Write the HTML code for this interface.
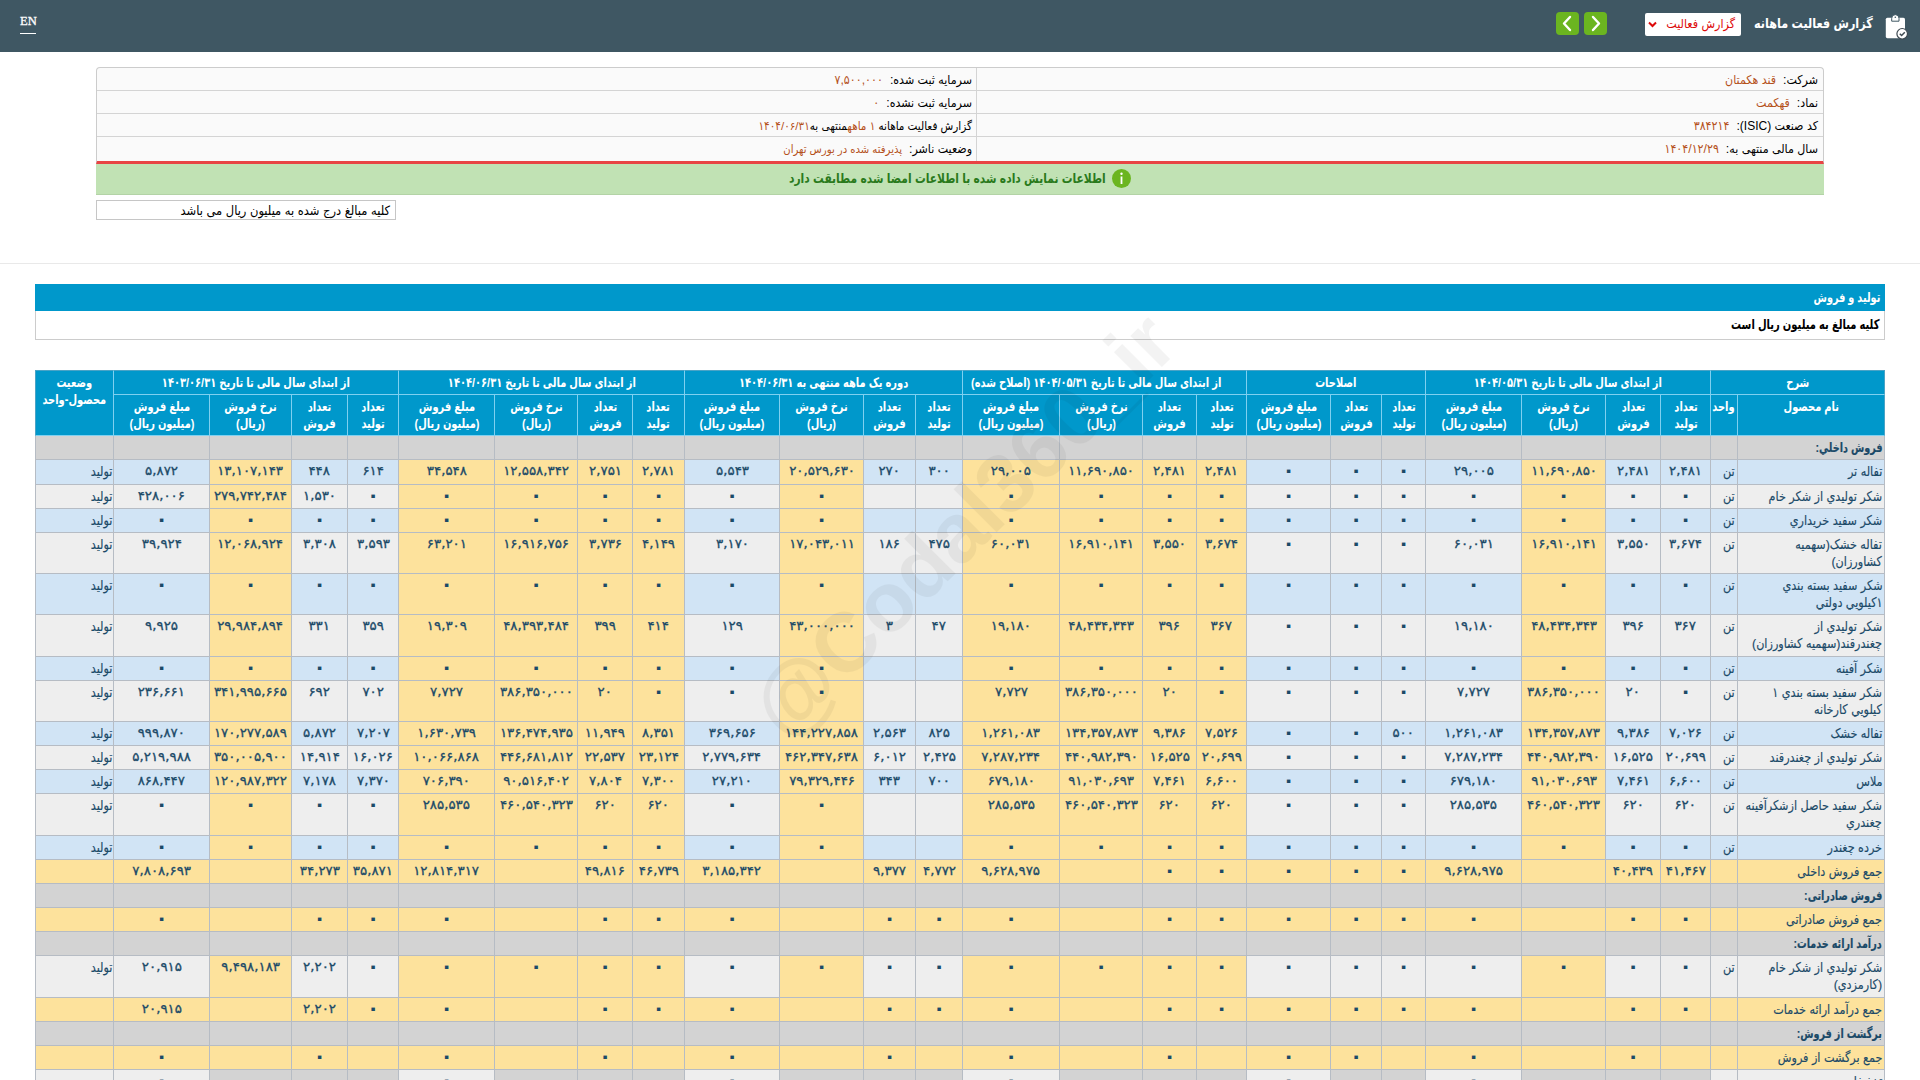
<!DOCTYPE html>
<html lang="fa" dir="rtl">
<head>
<meta charset="utf-8">
<title>گزارش فعالیت ماهانه</title>
<style>
*{box-sizing:border-box;margin:0;padding:0}
html,body{width:1920px;height:1080px;overflow:hidden;background:#fff}
body{font-family:"Liberation Sans","DejaVu Sans Condensed","DejaVu Sans",sans-serif;font-size:12px;color:#000;position:relative}
.abs{position:absolute}
/* top bar */
#bar{left:0;top:0;width:1920px;height:52px;background:#3f5763}
#en{left:20px;top:13px;font-family:"Liberation Serif",serif;font-size:12.6px;-webkit-text-stroke:.3px #fff;color:#fff;line-height:17px;direction:ltr;border-bottom:1px solid #fff;padding-bottom:3px;width:16px;white-space:nowrap}
#ttl{right:47px;top:12px;height:24px;line-height:24px;color:#fff;font-weight:bold;font-size:13.6px;white-space:nowrap;transform:scaleX(.915);transform-origin:right center}
#sel{left:1645px;top:13px;width:96px;height:23px;background:#fff;border-radius:2px;color:#dd0a0a;font-size:12.4px;line-height:22px;padding-right:6px;white-space:nowrap}
.btn{top:12px;width:23px;height:23px;background:#6bb520;border-radius:4px}
/* info */
#info{left:96px;top:67px;width:1728px;height:97px;border:1px solid #ccc;border-bottom:3px solid #e84444;border-radius:4px 4px 0 0;background:#fafafa}
#info .r{position:absolute;left:0;right:0;height:23px;border-bottom:1px solid #d4d4d4;line-height:24px;font-size:12.3px;white-space:nowrap}
#info .c{position:absolute;top:0;height:100%;padding-right:5px}
#info .c1{right:0;width:846px}
#info .c2{right:846px;left:0;border-right:1px solid #d4d4d4;padding-right:4px}
#info b{font-weight:normal;color:#b5511b;margin-right:7px}
#ok{left:96px;top:164px;width:1728px;height:31px;background:#c1e2b4;border-bottom:1px solid #b3d3a6;color:#2a7a1c;font-weight:bold;font-size:13.4px;line-height:30px;text-align:center;white-space:nowrap}
#ok span{position:absolute;right:718px;top:0;display:inline-block;transform:scaleX(.888);transform-origin:right center}
#note{left:96px;top:200px;width:300px;height:20px;border:1px solid #c6c6c6;background:#fff;font-size:12.8px;line-height:20px;padding-right:5px;white-space:nowrap;overflow:hidden}
#hr{left:0;top:263px;width:1920px;height:1px;background:#e9e9e9}
#sect{left:35px;top:284px;width:1850px;height:27px;background:#0098cb;color:#fff;font-weight:bold;font-size:13.3px;line-height:27px;padding-right:5px}
#sect span,#sub span{display:inline-block;transform:scaleX(.812);transform-origin:right center;white-space:nowrap}
#sub span{transform:scaleX(.827)}
#sub{left:35px;top:311px;width:1850px;height:29px;background:#fff;border:1px solid #ccc;border-top:0;font-weight:bold;font-size:13.4px;line-height:28px;padding-right:5px}
/* grid */
table.grid{position:absolute;left:35px;top:370px;width:1850px;table-layout:fixed;border-collapse:separate;border-spacing:0;color:#1b4a68}
.grid th,.grid td{border-left:1px solid #b6bcc4;border-bottom:1px solid #b6bcc4;overflow:hidden;vertical-align:top;padding:0}
.grid th span{display:inline-block;transform:scaleX(.833);white-space:nowrap}
.grid td span{display:inline-block;transform:scaleX(.922);transform-origin:right top;white-space:nowrap}
.grid th{background:#0098cb;color:#fff;font-weight:bold;font-size:13.2px;line-height:17px;border-color:#7fd0f0;text-align:center;padding-top:3px}
.grid tr.h1 th{border-top:1px solid #4aa3c6}
.grid th:first-child,.grid td:first-child{border-right:1px solid #b6bcc4}
.grid tr.h2 th:first-child,.grid tr.h1 th:first-child{border-right-color:#4aa3c6}
.grid th.st{border-left-color:#4aa3c6}
.grid td{font-size:13.5px;line-height:17px;padding-top:3px;-webkit-text-stroke:.15px #1b4a68;white-space:nowrap}
.grid td.n{text-align:right;padding-right:2px;padding-left:2px}
.grid td.u{text-align:right;padding-right:2px}
.grid td.s{text-align:right;padding-right:1px}
.grid td.v{text-align:center;font-family:"DejaVu Sans",sans-serif;font-size:12.6px;-webkit-text-stroke:.3px #1b4a68;white-space:nowrap}
.grid td.v i{display:inline-block;font-style:normal;transform:scaleX(1.06)}
.grid td.v{padding-top:2px}
.grid td.z{font-size:20px;font-weight:bold;-webkit-text-stroke:0;line-height:17px;padding-top:2px}
.grid tr.b td{background:#d1e4f5}
.grid tr.g td{background:#eeeeee}
.grid tr.b td.y,.grid tr.g td.y,.grid tr.sum td{background:#fde29c}
.grid tr.sec td{background:#d3d3d3}
.grid tr.sec td.n{font-weight:bold;font-size:13.2px;white-space:nowrap;overflow:visible}
.grid tr.sec td.n span{transform:scaleX(.812)}
.grid tr.disc td{background:#eeeeee}
.grid tr.disc td.d{background:#d3d3d3}
#wm{left:963px;top:525px;width:0;height:0;overflow:visible;pointer-events:none}
#wm span{position:absolute;left:-400px;top:-60px;width:800px;height:120px;line-height:120px;text-align:center;font-family:"Liberation Sans",sans-serif;font-weight:bold;font-size:84px;color:#000;opacity:.045;transform:rotate(-45deg);direction:ltr;white-space:nowrap}
</style>
</head>
<body>
<div id="bar" class="abs"></div>
<div id="en" class="abs">EN</div>
<svg class="abs" style="left:1884px;top:12px" width="28" height="30" viewBox="0 0 28 30">
 <rect x="1.800" y="5.700" width="19.200" height="20.500" rx="1.600" fill="#fff"/>
 <path d="M7.700 9.200V6.300a3.650 3.650 0 0 1 7.300 0v2.900z" fill="#fff" stroke="#3f5763" stroke-width="1"/>
 <circle cx="11.300" cy="5.200" r=".800" fill="#3f5763"/>
 <circle cx="18.200" cy="21.800" r="5.300" fill="#fff" stroke="#3f4a52" stroke-width="1.200"/>
 <path d="M15.800 21.700l1.800 1.800 3.200-3.300" fill="none" stroke="#3f4a52" stroke-width="1.500"/>
</svg>
<div id="ttl" class="abs">گزارش فعالیت ماهانه</div>
<div id="sel" class="abs">گزارش فعالیت
 <svg class="abs" style="left:3px;top:8px" width="9" height="7" viewBox="0 0 9 7"><path d="M1 1.500l3.500 3.500 3.500-3.500" fill="none" stroke="#dd0a0a" stroke-width="2"/></svg>
</div>
<div class="btn abs" style="left:1584px"><svg width="23" height="23" viewBox="0 0 23 23"><path d="M9 5l6 6.500-6 6.500" fill="none" stroke="#fff" stroke-width="2.400" stroke-linecap="round" stroke-linejoin="round"/></svg></div>
<div class="btn abs" style="left:1556px"><svg width="23" height="23" viewBox="0 0 23 23"><path d="M14 5l-6 6.500 6 6.500" fill="none" stroke="#fff" stroke-width="2.400" stroke-linecap="round" stroke-linejoin="round"/></svg></div>

<div id="info" class="abs">
 <div class="r" style="top:0"><div class="c c1">شرکت:<b>قند هکمتان</b></div><div class="c c2">سرمایه ثبت شده:<b>۷,۵۰۰,۰۰۰</b></div></div>
 <div class="r" style="top:23px"><div class="c c1">نماد:<b>قهکمت</b></div><div class="c c2">سرمایه ثبت نشده:<b>۰</b></div></div>
 <div class="r" style="top:46px"><div class="c c1">کد صنعت <span style="font-size:12px">(ISIC)</span>:<b>۳۸۴۲۱۴</b></div><div class="c c2" style="font-size:11.6px">گزارش فعالیت ماهانه <b style="margin:0">۱ ماهه</b>منتهی به<b style="margin:0">۱۴۰۴/۰۶/۳۱</b></div></div>
 <div class="r" style="top:69px;height:24px;border-bottom:0"><div class="c c1">سال مالی منتهی به:<b>۱۴۰۴/۱۲/۲۹</b></div><div class="c c2">وضعیت ناشر:<b style="font-size:11.2px">پذیرفته شده در بورس تهران</b></div></div>
</div>
<div id="ok" class="abs"><svg style="position:absolute;left:1015.5px;top:5px" width="19" height="19" viewBox="0 0 19 19"><circle cx="9.500" cy="9.500" r="9.500" fill="#6bb520"/><rect x="8.600" y="7.500" width="1.800" height="7.500" fill="#fff"/><circle cx="9.500" cy="4.800" r="1.200" fill="#fff"/></svg><span>اطلاعات نمایش داده شده با اطلاعات امضا شده مطابقت دارد</span></div>
<div id="note" class="abs">کلیه مبالغ درج شده به میلیون ریال می باشد</div>
<div id="hr" class="abs"></div>
<div id="sect" class="abs"><span>تولید و فروش</span></div>
<div id="sub" class="abs"><span>کلیه مبالغ به میلیون ریال است</span></div>
<table class="grid" dir="rtl"><colgroup>
<col style="width:148px">
<col style="width:27px">
<col style="width:50px">
<col style="width:55px">
<col style="width:84px">
<col style="width:96px">
<col style="width:44px">
<col style="width:51px">
<col style="width:84px">
<col style="width:50px">
<col style="width:54px">
<col style="width:83px">
<col style="width:97px">
<col style="width:47px">
<col style="width:52px">
<col style="width:84px">
<col style="width:95px">
<col style="width:52px">
<col style="width:55px">
<col style="width:83px">
<col style="width:96px">
<col style="width:51px">
<col style="width:56px">
<col style="width:82px">
<col style="width:96px">
<col style="width:78px">
</colgroup>
<tr class="h1" style="height:25px"><th colspan="2"><span>شرح</span></th>
<th colspan="4"><span>از ابتدای سال مالی تا تاریخ ۱۴۰۴/۰۵/۳۱</span></th>
<th colspan="3"><span>اصلاحات</span></th>
<th colspan="4"><span>از ابتدای سال مالی تا تاریخ ۱۴۰۴/۰۵/۳۱ (اصلاح شده)</span></th>
<th colspan="4"><span>دوره یک ماهه منتهی به ۱۴۰۴/۰۶/۳۱</span></th>
<th colspan="4"><span>از ابتدای سال مالی تا تاریخ ۱۴۰۴/۰۶/۳۱</span></th>
<th colspan="4"><span>از ابتدای سال مالی تا تاریخ ۱۴۰۳/۰۶/۳۱</span></th>
<th rowspan="2" class="st"><span>وضعیت<br>محصول-واحد</span></th></tr>
<tr class="h2" style="height:41px"><th><span>نام محصول</span></th><th class="u"><span>واحد</span></th>
<th><span>تعداد<br>تولید</span></th><th><span>تعداد<br>فروش</span></th><th><span>نرخ فروش<br>(ریال)</span></th><th><span>مبلغ فروش<br>(میلیون ریال)</span></th>
<th><span>تعداد<br>تولید</span></th><th><span>تعداد<br>فروش</span></th><th><span>مبلغ فروش<br>(میلیون ریال)</span></th>
<th><span>تعداد<br>تولید</span></th><th><span>تعداد<br>فروش</span></th><th><span>نرخ فروش<br>(ریال)</span></th><th><span>مبلغ فروش<br>(میلیون ریال)</span></th>
<th><span>تعداد<br>تولید</span></th><th><span>تعداد<br>فروش</span></th><th><span>نرخ فروش<br>(ریال)</span></th><th><span>مبلغ فروش<br>(میلیون ریال)</span></th>
<th><span>تعداد<br>تولید</span></th><th><span>تعداد<br>فروش</span></th><th><span>نرخ فروش<br>(ریال)</span></th><th><span>مبلغ فروش<br>(میلیون ریال)</span></th>
<th><span>تعداد<br>تولید</span></th><th><span>تعداد<br>فروش</span></th><th><span>نرخ فروش<br>(ریال)</span></th><th><span>مبلغ فروش<br>(میلیون ریال)</span></th>
</tr>
<tr class="sec" style="height:24px"><td class="n"><span>فروش داخلي:</span></td><td></td><td></td><td></td><td></td><td></td><td></td><td></td><td></td><td></td><td></td><td></td><td></td><td></td><td></td><td></td><td></td><td></td><td></td><td></td><td></td><td></td><td></td><td></td><td></td><td></td></tr>
<tr class="b" style="height:25px"><td class="n"><span>تفاله تر</span></td><td class="u"><span>تن</span></td><td class="v"><i>۲,۴۸۱</i></td><td class="v"><i>۲,۴۸۱</i></td><td class="v y"><i>۱۱,۶۹۰,۸۵۰</i></td><td class="v"><i>۲۹,۰۰۵</i></td><td class="v z">۰</td><td class="v z">۰</td><td class="v z">۰</td><td class="v y"><i>۲,۴۸۱</i></td><td class="v y"><i>۲,۴۸۱</i></td><td class="v y"><i>۱۱,۶۹۰,۸۵۰</i></td><td class="v y"><i>۲۹,۰۰۵</i></td><td class="v"><i>۳۰۰</i></td><td class="v"><i>۲۷۰</i></td><td class="v y"><i>۲۰,۵۲۹,۶۳۰</i></td><td class="v"><i>۵,۵۴۳</i></td><td class="v y"><i>۲,۷۸۱</i></td><td class="v y"><i>۲,۷۵۱</i></td><td class="v y"><i>۱۲,۵۵۸,۳۴۲</i></td><td class="v y"><i>۳۴,۵۴۸</i></td><td class="v"><i>۶۱۴</i></td><td class="v"><i>۴۴۸</i></td><td class="v y"><i>۱۳,۱۰۷,۱۴۳</i></td><td class="v"><i>۵,۸۷۲</i></td><td class="s"><span>تولید</span></td></tr>
<tr class="g" style="height:24px"><td class="n"><span>شکر تولیدي از شکر خام</span></td><td class="u"><span>تن</span></td><td class="v z">۰</td><td class="v z">۰</td><td class="v y z">۰</td><td class="v z">۰</td><td class="v z">۰</td><td class="v z">۰</td><td class="v z">۰</td><td class="v y z">۰</td><td class="v y z">۰</td><td class="v y z">۰</td><td class="v y z">۰</td><td class="v"></td><td class="v"></td><td class="v y z">۰</td><td class="v z">۰</td><td class="v y z">۰</td><td class="v y z">۰</td><td class="v y z">۰</td><td class="v y z">۰</td><td class="v z">۰</td><td class="v"><i>۱,۵۳۰</i></td><td class="v y"><i>۲۷۹,۷۴۲,۴۸۴</i></td><td class="v"><i>۴۲۸,۰۰۶</i></td><td class="s"><span>تولید</span></td></tr>
<tr class="b" style="height:24px"><td class="n"><span>شکر سفید خریداري</span></td><td class="u"><span>تن</span></td><td class="v z">۰</td><td class="v z">۰</td><td class="v y z">۰</td><td class="v z">۰</td><td class="v z">۰</td><td class="v z">۰</td><td class="v z">۰</td><td class="v y z">۰</td><td class="v y z">۰</td><td class="v y z">۰</td><td class="v y z">۰</td><td class="v"></td><td class="v"></td><td class="v y z">۰</td><td class="v z">۰</td><td class="v y z">۰</td><td class="v y z">۰</td><td class="v y z">۰</td><td class="v y z">۰</td><td class="v z">۰</td><td class="v z">۰</td><td class="v y z">۰</td><td class="v z">۰</td><td class="s"><span>تولید</span></td></tr>
<tr class="g" style="height:41px"><td class="n"><span>تفاله خشک(سهمیه<br>کشاورزان)</span></td><td class="u"><span>تن</span></td><td class="v"><i>۳,۶۷۴</i></td><td class="v"><i>۳,۵۵۰</i></td><td class="v y"><i>۱۶,۹۱۰,۱۴۱</i></td><td class="v"><i>۶۰,۰۳۱</i></td><td class="v z">۰</td><td class="v z">۰</td><td class="v z">۰</td><td class="v y"><i>۳,۶۷۴</i></td><td class="v y"><i>۳,۵۵۰</i></td><td class="v y"><i>۱۶,۹۱۰,۱۴۱</i></td><td class="v y"><i>۶۰,۰۳۱</i></td><td class="v"><i>۴۷۵</i></td><td class="v"><i>۱۸۶</i></td><td class="v y"><i>۱۷,۰۴۳,۰۱۱</i></td><td class="v"><i>۳,۱۷۰</i></td><td class="v y"><i>۴,۱۴۹</i></td><td class="v y"><i>۳,۷۳۶</i></td><td class="v y"><i>۱۶,۹۱۶,۷۵۶</i></td><td class="v y"><i>۶۳,۲۰۱</i></td><td class="v"><i>۳,۵۹۳</i></td><td class="v"><i>۳,۳۰۸</i></td><td class="v y"><i>۱۲,۰۶۸,۹۲۴</i></td><td class="v"><i>۳۹,۹۲۴</i></td><td class="s"><span>تولید</span></td></tr>
<tr class="b" style="height:41px"><td class="n"><span>شکر سفید بسته بندي<br>۱کیلویي دولتي</span></td><td class="u"><span>تن</span></td><td class="v z">۰</td><td class="v z">۰</td><td class="v y z">۰</td><td class="v z">۰</td><td class="v z">۰</td><td class="v z">۰</td><td class="v z">۰</td><td class="v y z">۰</td><td class="v y z">۰</td><td class="v y z">۰</td><td class="v y z">۰</td><td class="v"></td><td class="v"></td><td class="v y z">۰</td><td class="v z">۰</td><td class="v y z">۰</td><td class="v y z">۰</td><td class="v y z">۰</td><td class="v y z">۰</td><td class="v z">۰</td><td class="v z">۰</td><td class="v y z">۰</td><td class="v z">۰</td><td class="s"><span>تولید</span></td></tr>
<tr class="g" style="height:42px"><td class="n"><span>شکر تولیدي از<br>چغندرقند(سهمیه کشاورزان)</span></td><td class="u"><span>تن</span></td><td class="v"><i>۳۶۷</i></td><td class="v"><i>۳۹۶</i></td><td class="v y"><i>۴۸,۴۳۴,۳۴۳</i></td><td class="v"><i>۱۹,۱۸۰</i></td><td class="v z">۰</td><td class="v z">۰</td><td class="v z">۰</td><td class="v y"><i>۳۶۷</i></td><td class="v y"><i>۳۹۶</i></td><td class="v y"><i>۴۸,۴۳۴,۳۴۳</i></td><td class="v y"><i>۱۹,۱۸۰</i></td><td class="v"><i>۴۷</i></td><td class="v"><i>۳</i></td><td class="v y"><i>۴۳,۰۰۰,۰۰۰</i></td><td class="v"><i>۱۲۹</i></td><td class="v y"><i>۴۱۴</i></td><td class="v y"><i>۳۹۹</i></td><td class="v y"><i>۴۸,۳۹۳,۴۸۴</i></td><td class="v y"><i>۱۹,۳۰۹</i></td><td class="v"><i>۳۵۹</i></td><td class="v"><i>۳۳۱</i></td><td class="v y"><i>۲۹,۹۸۴,۸۹۴</i></td><td class="v"><i>۹,۹۲۵</i></td><td class="s"><span>تولید</span></td></tr>
<tr class="b" style="height:24px"><td class="n"><span>شکر آفینه</span></td><td class="u"><span>تن</span></td><td class="v z">۰</td><td class="v z">۰</td><td class="v y z">۰</td><td class="v z">۰</td><td class="v z">۰</td><td class="v z">۰</td><td class="v z">۰</td><td class="v y z">۰</td><td class="v y z">۰</td><td class="v y z">۰</td><td class="v y z">۰</td><td class="v"></td><td class="v"></td><td class="v y z">۰</td><td class="v z">۰</td><td class="v y z">۰</td><td class="v y z">۰</td><td class="v y z">۰</td><td class="v y z">۰</td><td class="v z">۰</td><td class="v z">۰</td><td class="v y z">۰</td><td class="v z">۰</td><td class="s"><span>تولید</span></td></tr>
<tr class="g" style="height:41px"><td class="n"><span>شکر سفید بسته بندي ۱<br>کیلویي کارخانه</span></td><td class="u"><span>تن</span></td><td class="v z">۰</td><td class="v"><i>۲۰</i></td><td class="v y"><i>۳۸۶,۳۵۰,۰۰۰</i></td><td class="v"><i>۷,۷۲۷</i></td><td class="v z">۰</td><td class="v z">۰</td><td class="v z">۰</td><td class="v y z">۰</td><td class="v y"><i>۲۰</i></td><td class="v y"><i>۳۸۶,۳۵۰,۰۰۰</i></td><td class="v y"><i>۷,۷۲۷</i></td><td class="v"></td><td class="v"></td><td class="v y z">۰</td><td class="v z">۰</td><td class="v y z">۰</td><td class="v y"><i>۲۰</i></td><td class="v y"><i>۳۸۶,۳۵۰,۰۰۰</i></td><td class="v y"><i>۷,۷۲۷</i></td><td class="v"><i>۷۰۲</i></td><td class="v"><i>۶۹۲</i></td><td class="v y"><i>۳۴۱,۹۹۵,۶۶۵</i></td><td class="v"><i>۲۳۶,۶۶۱</i></td><td class="s"><span>تولید</span></td></tr>
<tr class="b" style="height:24px"><td class="n"><span>تفاله خشک</span></td><td class="u"><span>تن</span></td><td class="v"><i>۷,۰۲۶</i></td><td class="v"><i>۹,۳۸۶</i></td><td class="v y"><i>۱۳۴,۳۵۷,۸۷۳</i></td><td class="v"><i>۱,۲۶۱,۰۸۳</i></td><td class="v"><i>۵۰۰</i></td><td class="v z">۰</td><td class="v z">۰</td><td class="v y"><i>۷,۵۲۶</i></td><td class="v y"><i>۹,۳۸۶</i></td><td class="v y"><i>۱۳۴,۳۵۷,۸۷۳</i></td><td class="v y"><i>۱,۲۶۱,۰۸۳</i></td><td class="v"><i>۸۲۵</i></td><td class="v"><i>۲,۵۶۳</i></td><td class="v y"><i>۱۴۴,۲۲۷,۸۵۸</i></td><td class="v"><i>۳۶۹,۶۵۶</i></td><td class="v y"><i>۸,۳۵۱</i></td><td class="v y"><i>۱۱,۹۴۹</i></td><td class="v y"><i>۱۳۶,۴۷۴,۹۳۵</i></td><td class="v y"><i>۱,۶۳۰,۷۳۹</i></td><td class="v"><i>۷,۲۰۷</i></td><td class="v"><i>۵,۸۷۲</i></td><td class="v y"><i>۱۷۰,۲۷۷,۵۸۹</i></td><td class="v"><i>۹۹۹,۸۷۰</i></td><td class="s"><span>تولید</span></td></tr>
<tr class="g" style="height:24px"><td class="n"><span>شکر تولیدي از چغندرقند</span></td><td class="u"><span>تن</span></td><td class="v"><i>۲۰,۶۹۹</i></td><td class="v"><i>۱۶,۵۲۵</i></td><td class="v y"><i>۴۴۰,۹۸۲,۳۹۰</i></td><td class="v"><i>۷,۲۸۷,۲۳۴</i></td><td class="v z">۰</td><td class="v z">۰</td><td class="v z">۰</td><td class="v y"><i>۲۰,۶۹۹</i></td><td class="v y"><i>۱۶,۵۲۵</i></td><td class="v y"><i>۴۴۰,۹۸۲,۳۹۰</i></td><td class="v y"><i>۷,۲۸۷,۲۳۴</i></td><td class="v"><i>۲,۴۲۵</i></td><td class="v"><i>۶,۰۱۲</i></td><td class="v y"><i>۴۶۲,۳۴۷,۶۳۸</i></td><td class="v"><i>۲,۷۷۹,۶۳۴</i></td><td class="v y"><i>۲۳,۱۲۴</i></td><td class="v y"><i>۲۲,۵۳۷</i></td><td class="v y"><i>۴۴۶,۶۸۱,۸۱۲</i></td><td class="v y"><i>۱۰,۰۶۶,۸۶۸</i></td><td class="v"><i>۱۶,۰۲۶</i></td><td class="v"><i>۱۴,۹۱۴</i></td><td class="v y"><i>۳۵۰,۰۰۵,۹۰۰</i></td><td class="v"><i>۵,۲۱۹,۹۸۸</i></td><td class="s"><span>تولید</span></td></tr>
<tr class="b" style="height:24px"><td class="n"><span>ملاس</span></td><td class="u"><span>تن</span></td><td class="v"><i>۶,۶۰۰</i></td><td class="v"><i>۷,۴۶۱</i></td><td class="v y"><i>۹۱,۰۳۰,۶۹۳</i></td><td class="v"><i>۶۷۹,۱۸۰</i></td><td class="v z">۰</td><td class="v z">۰</td><td class="v z">۰</td><td class="v y"><i>۶,۶۰۰</i></td><td class="v y"><i>۷,۴۶۱</i></td><td class="v y"><i>۹۱,۰۳۰,۶۹۳</i></td><td class="v y"><i>۶۷۹,۱۸۰</i></td><td class="v"><i>۷۰۰</i></td><td class="v"><i>۳۴۳</i></td><td class="v y"><i>۷۹,۳۲۹,۴۴۶</i></td><td class="v"><i>۲۷,۲۱۰</i></td><td class="v y"><i>۷,۳۰۰</i></td><td class="v y"><i>۷,۸۰۴</i></td><td class="v y"><i>۹۰,۵۱۶,۴۰۲</i></td><td class="v y"><i>۷۰۶,۳۹۰</i></td><td class="v"><i>۷,۳۷۰</i></td><td class="v"><i>۷,۱۷۸</i></td><td class="v y"><i>۱۲۰,۹۸۷,۳۲۲</i></td><td class="v"><i>۸۶۸,۴۴۷</i></td><td class="s"><span>تولید</span></td></tr>
<tr class="g" style="height:42px"><td class="n"><span>شکر سفید حاصل ازشکرآفینه<br>چغندري</span></td><td class="u"><span>تن</span></td><td class="v"><i>۶۲۰</i></td><td class="v"><i>۶۲۰</i></td><td class="v y"><i>۴۶۰,۵۴۰,۳۲۳</i></td><td class="v"><i>۲۸۵,۵۳۵</i></td><td class="v z">۰</td><td class="v z">۰</td><td class="v z">۰</td><td class="v y"><i>۶۲۰</i></td><td class="v y"><i>۶۲۰</i></td><td class="v y"><i>۴۶۰,۵۴۰,۳۲۳</i></td><td class="v y"><i>۲۸۵,۵۳۵</i></td><td class="v"></td><td class="v"></td><td class="v y z">۰</td><td class="v z">۰</td><td class="v y"><i>۶۲۰</i></td><td class="v y"><i>۶۲۰</i></td><td class="v y"><i>۴۶۰,۵۴۰,۳۲۳</i></td><td class="v y"><i>۲۸۵,۵۳۵</i></td><td class="v z">۰</td><td class="v z">۰</td><td class="v y z">۰</td><td class="v z">۰</td><td class="s"><span>تولید</span></td></tr>
<tr class="b" style="height:24px"><td class="n"><span>خرده چغندر</span></td><td class="u"><span>تن</span></td><td class="v z">۰</td><td class="v z">۰</td><td class="v y z">۰</td><td class="v z">۰</td><td class="v z">۰</td><td class="v z">۰</td><td class="v z">۰</td><td class="v y z">۰</td><td class="v y z">۰</td><td class="v y z">۰</td><td class="v y z">۰</td><td class="v"></td><td class="v"></td><td class="v y z">۰</td><td class="v z">۰</td><td class="v y z">۰</td><td class="v y z">۰</td><td class="v y z">۰</td><td class="v y z">۰</td><td class="v z">۰</td><td class="v z">۰</td><td class="v y z">۰</td><td class="v z">۰</td><td class="s"><span>تولید</span></td></tr>
<tr class="sum" style="height:24px"><td class="n"><span>جمع فروش داخلی</span></td><td class="u"></td><td class="v"><i>۴۱,۴۶۷</i></td><td class="v"><i>۴۰,۴۳۹</i></td><td class="v"></td><td class="v"><i>۹,۶۲۸,۹۷۵</i></td><td class="v z">۰</td><td class="v z">۰</td><td class="v z">۰</td><td class="v z">۰</td><td class="v z">۰</td><td class="v"></td><td class="v"><i>۹,۶۲۸,۹۷۵</i></td><td class="v"><i>۴,۷۷۲</i></td><td class="v"><i>۹,۳۷۷</i></td><td class="v"></td><td class="v"><i>۳,۱۸۵,۳۴۲</i></td><td class="v"><i>۴۶,۷۳۹</i></td><td class="v"><i>۴۹,۸۱۶</i></td><td class="v"></td><td class="v"><i>۱۲,۸۱۴,۳۱۷</i></td><td class="v"><i>۳۵,۸۷۱</i></td><td class="v"><i>۳۴,۲۷۳</i></td><td class="v"></td><td class="v"><i>۷,۸۰۸,۶۹۳</i></td><td class="s"></td></tr>
<tr class="sec" style="height:24px"><td class="n"><span>فروش صادراتی:</span></td><td></td><td></td><td></td><td></td><td></td><td></td><td></td><td></td><td></td><td></td><td></td><td></td><td></td><td></td><td></td><td></td><td></td><td></td><td></td><td></td><td></td><td></td><td></td><td></td><td></td></tr>
<tr class="sum" style="height:24px"><td class="n"><span>جمع فروش صادراتی</span></td><td class="u"></td><td class="v z">۰</td><td class="v z">۰</td><td class="v"></td><td class="v z">۰</td><td class="v z">۰</td><td class="v z">۰</td><td class="v z">۰</td><td class="v z">۰</td><td class="v z">۰</td><td class="v"></td><td class="v z">۰</td><td class="v z">۰</td><td class="v z">۰</td><td class="v"></td><td class="v z">۰</td><td class="v z">۰</td><td class="v z">۰</td><td class="v"></td><td class="v z">۰</td><td class="v z">۰</td><td class="v z">۰</td><td class="v"></td><td class="v z">۰</td><td class="s"></td></tr>
<tr class="sec" style="height:24px"><td class="n"><span>درآمد ارائه خدمات:</span></td><td></td><td></td><td></td><td></td><td></td><td></td><td></td><td></td><td></td><td></td><td></td><td></td><td></td><td></td><td></td><td></td><td></td><td></td><td></td><td></td><td></td><td></td><td></td><td></td><td></td></tr>
<tr class="g" style="height:42px"><td class="n"><span>شکر تولیدي از شکر خام<br>(کارمزدي)</span></td><td class="u"><span>تن</span></td><td class="v z">۰</td><td class="v z">۰</td><td class="v y z">۰</td><td class="v z">۰</td><td class="v z">۰</td><td class="v z">۰</td><td class="v z">۰</td><td class="v y z">۰</td><td class="v y z">۰</td><td class="v y z">۰</td><td class="v y z">۰</td><td class="v z">۰</td><td class="v z">۰</td><td class="v y z">۰</td><td class="v z">۰</td><td class="v y z">۰</td><td class="v y z">۰</td><td class="v y z">۰</td><td class="v y z">۰</td><td class="v z">۰</td><td class="v"><i>۲,۲۰۲</i></td><td class="v y"><i>۹,۴۹۸,۱۸۳</i></td><td class="v"><i>۲۰,۹۱۵</i></td><td class="s"><span>تولید</span></td></tr>
<tr class="sum" style="height:24px"><td class="n"><span>جمع درآمد ارائه خدمات</span></td><td class="u"></td><td class="v z">۰</td><td class="v z">۰</td><td class="v"></td><td class="v z">۰</td><td class="v z">۰</td><td class="v z">۰</td><td class="v z">۰</td><td class="v z">۰</td><td class="v z">۰</td><td class="v"></td><td class="v z">۰</td><td class="v z">۰</td><td class="v z">۰</td><td class="v"></td><td class="v z">۰</td><td class="v z">۰</td><td class="v z">۰</td><td class="v"></td><td class="v z">۰</td><td class="v z">۰</td><td class="v"><i>۲,۲۰۲</i></td><td class="v"></td><td class="v"><i>۲۰,۹۱۵</i></td><td class="s"></td></tr>
<tr class="sec" style="height:24px"><td class="n"><span>برگشت از فروش:</span></td><td></td><td></td><td></td><td></td><td></td><td></td><td></td><td></td><td></td><td></td><td></td><td></td><td></td><td></td><td></td><td></td><td></td><td></td><td></td><td></td><td></td><td></td><td></td><td></td><td></td></tr>
<tr class="sum" style="height:24px"><td class="n"><span>جمع برگشت از فروش</span></td><td class="u"></td><td class="v"></td><td class="v z">۰</td><td class="v"></td><td class="v z">۰</td><td class="v"></td><td class="v z">۰</td><td class="v z">۰</td><td class="v"></td><td class="v z">۰</td><td class="v"></td><td class="v z">۰</td><td class="v"></td><td class="v z">۰</td><td class="v"></td><td class="v z">۰</td><td class="v"></td><td class="v z">۰</td><td class="v"></td><td class="v z">۰</td><td class="v"></td><td class="v z">۰</td><td class="v"></td><td class="v z">۰</td><td class="s"></td></tr>
<tr class="disc" style="height:24px"><td class="n"><span>تخفیفات</span></td><td class="u"></td><td class="v d"></td><td class="v d"></td><td class="v d"></td><td class="v z">۰</td><td class="v d"></td><td class="v d"></td><td class="v z">۰</td><td class="v d"></td><td class="v d"></td><td class="v d"></td><td class="v z">۰</td><td class="v d"></td><td class="v d"></td><td class="v d"></td><td class="v z">۰</td><td class="v d"></td><td class="v d"></td><td class="v d"></td><td class="v z">۰</td><td class="v d"></td><td class="v d"></td><td class="v d"></td><td class="v z">۰</td><td class="s"></td></tr>
</table>
<div id="wm" class="abs"><span>@Codal360_ir</span></div>
</body>
</html>
